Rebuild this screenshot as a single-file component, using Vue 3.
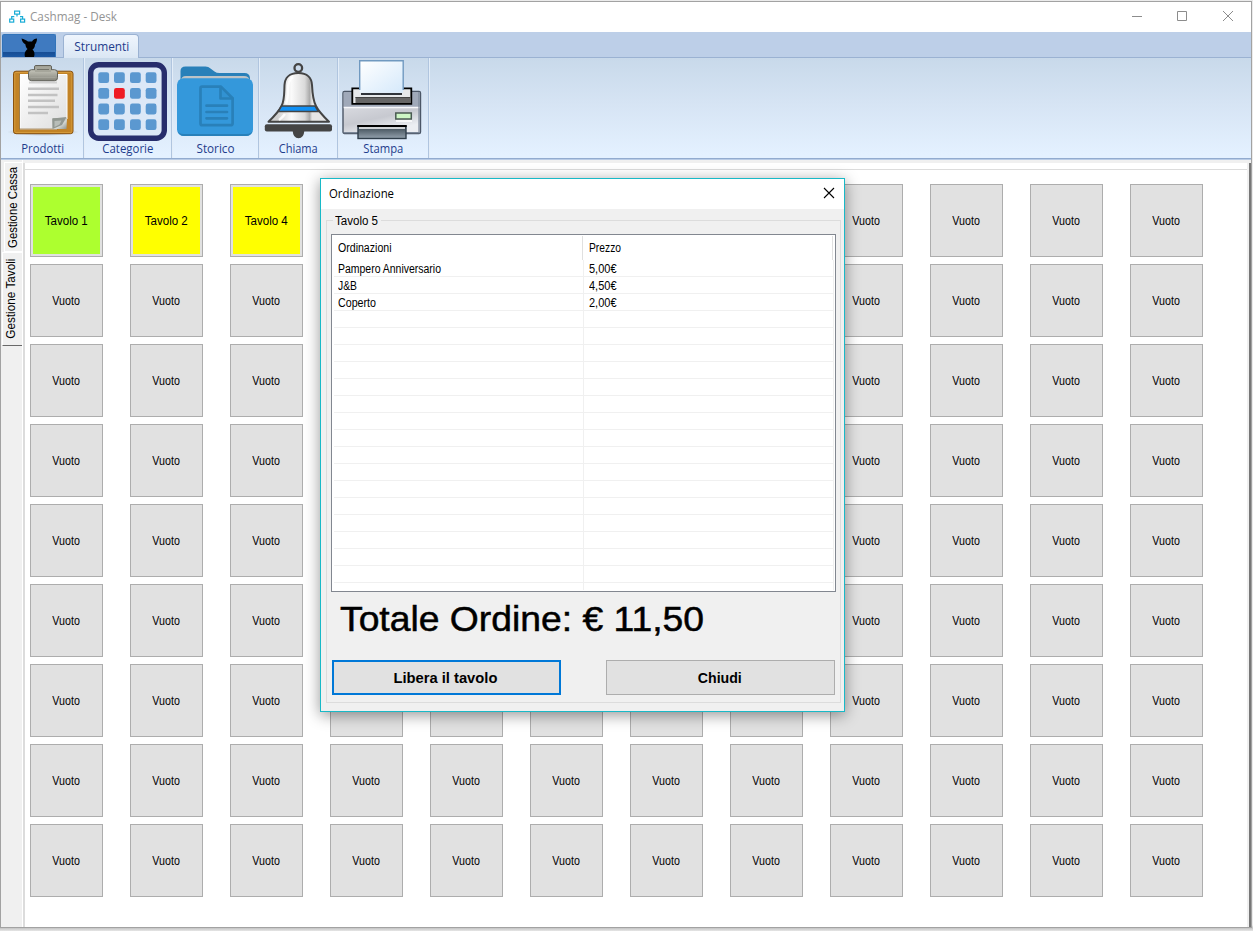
<script setup>
const rows = 9
const cols = 12
const special = { 0: ['Tavolo 1', 'green'], 1: ['Tavolo 2', 'yellow'], 2: ['Tavolo 4', 'yellow'] }
// Tables lying fully behind the dialog carry no label.
const covered = (i) => i % cols > 2 && i % cols < 8 && i < 7 * cols
const tables = Array.from({ length: rows * cols }, (_, i) => ({
  label: covered(i) ? '' : special[i]?.[0] ?? 'Vuoto',
  tone: special[i]?.[1] ?? '',
  width: special[i] ? 43 : 27.5,
}))

const orders = [
  { name: 'Pampero Anniversario', price: '5,00€', width: 103 },
  { name: 'J&B', price: '4,50€', width: 19 },
  { name: 'Coperto', price: '2,00€', width: 38 },
]
const blanks = 16
const squares = [11.3, 27, 42.6, 58.3].flatMap((y, r) =>
  [10.3, 26, 42, 57.7].map((x, c) => ({ x, y, hot: r === 1 && c === 1 })))

// Condenses or widens a label so that it takes the given length.
const vFit = {
  mounted(el, { value, modifiers }) {
    const length = modifiers.vertical ? el.offsetHeight : el.getBoundingClientRect().width
    const k = value / length
    el.style.transform = modifiers.vertical ? `rotate(180deg) scaleY(${k})` : `scaleX(${k})`
  },
}
</script>

<template>
  <div class="desktop">
    <div class="window">
      <header class="titlebar">
        <svg class="app-icon" width="17" height="14" viewBox="0 0 17 14" fill="none" stroke="#18acd6" stroke-width="1.2">
          <rect x="5.6" y="1.1" width="5" height="3" />
          <rect x="0.7" y="9.1" width="4" height="3" />
          <rect x="11.6" y="9.1" width="4" height="3" />
          <path d="M8 4v2.5M2.7 9V6.6h2.6M13.6 9V6.6H11" />
        </svg>
        <span class="app-title"><span v-fit="87" class="seg left">Cashmag - Desk</span></span>
        <svg class="controls" width="110" height="14" viewBox="0 0 110 14" fill="none" stroke="#8c8c8c">
          <path d="M0 7.5h10M45.500 2.500h9v9h-9zM91 2l10 10M101 2L91 12" />
        </svg>
      </header>

      <div class="tabstrip">
        <div class="app-button">
          <svg width="54" height="22" viewBox="0 0 54 22">
            <path d="M19.500 3.500C22 4 24 5 26 6.500h4C31 4.500 33 3.500 35 3.500C35 6.500 34 8.500 33 9.500C33 12 32 13.500 30.500 14.500C32.500 16 33 19 32 22H23C22 18 23.500 16 25.500 14C24 12.500 23.500 11 23.500 9.500C21 8 20 6 19.500 3.500Z" fill="#000" />
          </svg>
        </div>
        <div class="tab"><span v-fit="55" class="seg">Strumenti</span></div>
      </div>

      <div class="ribbon">
        <div class="tool g1">
          <svg width="80" height="80" viewBox="0 0 80 80">
            <defs>
              <linearGradient id="paper" x2="1" y2="1"><stop stop-color="#fff" /><stop offset="1" stop-color="#dedede" /></linearGradient>
              <linearGradient id="clip" x2="0" y2="1"><stop stop-color="#c6c6bb" /><stop offset="1" stop-color="#85857c" /></linearGradient>
              <linearGradient id="curl" x2="1" y2="1"><stop stop-color="#6e746e" /><stop offset=".6" stop-color="#d4d8d4" /><stop offset="1" stop-color="#8b918b" /></linearGradient>
              <radialGradient id="shade"><stop stop-color="#555" stop-opacity=".6" /><stop offset="1" stop-color="#555" stop-opacity="0" /></radialGradient>
            </defs>
            <ellipse cx="41" cy="71" rx="36" ry="4" fill="url(#shade)" />
            <rect x="11.500" y="10.200" width="59.500" height="62.500" rx="2.500" fill="#c28326" stroke="#8a5310" />
            <rect x="12.800" y="11.500" width="57" height="60" rx="1" fill="none" stroke="#d9a040" stroke-width=".8" />
            <path d="M18 13.500h47V58L55 68H18z" fill="url(#paper)" stroke="#fff" />
            <path d="M17.500 13v55h38" fill="none" stroke="#81602c" stroke-width=".7" />
            <path d="M50.500 68V57.500L65 57l-.5 11z" fill="url(#curl)" />
            <path d="M50.500 68V57.500L64.500 56L60 64z" fill="#929892" />
            <path d="M52.500 66v-6l7-.5-2 4z" fill="#b8bdb8" />
            <path d="M26 27.700h31M26 34h29.500M26 39.700h27M26 46h31M26 52h20" stroke="#c2c2c2" stroke-width="2.400" />
            <path d="M27 20.500h28v2H27z" fill="#bbb" opacity=".6" />
            <path d="M32.500 10V6q0-1.500 1.500-1.500h14q1.500 0 1.500 1.500v4" fill="#9b9b91" stroke="#62625a" />
            <rect x="26.500" y="8.700" width="29" height="11" rx="3" fill="url(#clip)" stroke="#62625a" />
            <path d="M33 5.500h16v5.500H33z" fill="#a6a69b" /><path d="M35 8.500h12" stroke="#74746b" />
            <path d="M28.500 16.500h25" stroke="#a4a49b" />
          </svg>
          <span v-fit="43" class="seg nudge">Prodotti</span>
        </div>
        <div class="tool g2">
          <svg width="79" height="80" viewBox="0 0 79 80">
            <rect x="2.700" y="3.700" width="73.600" height="73.600" rx="8" fill="#dce8f7" stroke="#272d6c" stroke-width="5.400" />
            <rect v-for="(s, i) in squares" :key="i" :x="s.x" :y="s.y" width="10.800" height="10.800" rx="2.300" :fill="s.hot ? '#ee1c25' : '#5b98d0'" />
          </svg>
          <span v-fit="51" class="seg nudge">Categorie</span>
        </div>
        <div class="tool g3">
          <svg width="80" height="80" viewBox="0 0 80 80">
            <path d="M5.500 25V10q0-4.500 5-4.500h20q3 0 5 2l4 3q2 1.500 5 1.500h25q5 0 5.500 5v8z" fill="#2980b9" />
            <path d="M6 20q0-5 5-5h58q5 0 6 5z" fill="#bdc3c7" />
            <rect x="2" y="17.300" width="76" height="57.600" rx="6.500" fill="#3498db" />
            <path d="M2.500 69q1 6 7 6h61q6 0 7.500-6-1 4-7 4H9q-6 0-6.500-4" fill="#2980b9" />
            <g fill="none" stroke="#2980b9" stroke-width="2.700" stroke-linejoin="round" stroke-linecap="round">
              <path d="M27 25.600h19l11.600 11.600v25q0 2-2 2H27q-1.500 0-1.500-2V27.500q0-1.900 1.500-1.900z" />
              <path d="M45.500 26v11.500h12M31.500 44.700h20.500M31.500 51h20.500M31.500 57.300h20.500" />
            </g>
            <path d="M45.500 26v11.500h12z" fill="#2980b9" opacity=".25" />
          </svg>
          <span v-fit="38" class="seg">Storico</span>
        </div>
        <div class="tool g4">
          <svg width="78" height="80" viewBox="0 0 78 80">
            <defs>
              <linearGradient id="bell"><stop offset=".15" stop-color="#d0d0d0" /><stop offset=".38" stop-color="#fafafa" /><stop offset=".6" stop-color="#dadada" /><stop offset=".68" stop-color="#aaa" /><stop offset=".72" stop-color="#e6e6e6" /></linearGradient>
            </defs>
            <circle cx="39.300" cy="7" r="3.800" fill="none" stroke="#444" stroke-width="2.300" />
            <path d="M33.700 70h11.600q-.5 7.300-5.800 7.300T33.700 70z" fill="#444" />
            <path d="M39.300 12c-9 0-13.500 5-13.800 12c-.4 9 .2 15-3 21c-3 6-7 10-13 15.700h60.500c-6-5.700-10-9.700-13-15.700c-3.200-6-3.600-12-4-21c-.3-7-4.700-12-13.700-12z" fill="url(#bell)" stroke="#444" stroke-width="2" stroke-linejoin="round" />
            <path d="M34 16q-5 3-5 12 0 10-2 15M26 53q-3 4-6 6" fill="none" stroke="#fff" stroke-width="2.500" opacity=".85" />
            <path d="M22.500 45h33.600l3.300 5.500H19.200z" fill="#1090f5" stroke="#444" stroke-width="1.500" />
            <rect x="5.800" y="63.200" width="67.200" height="7.200" rx="2" fill="#444" />
          </svg>
          <span v-fit="39" class="seg">Chiama</span>
        </div>
        <div class="tool g5">
          <svg width="80" height="80" viewBox="0 0 80 80">
            <defs>
              <linearGradient id="sheet" x2="1" y2="1"><stop stop-color="#fff" /><stop offset="1" stop-color="#d5e9fb" /></linearGradient>
              <linearGradient id="case" x2=".4" y2="1"><stop stop-color="#e7e8ed" /><stop offset=".7" stop-color="#c7c9d0" /><stop offset="1" stop-color="#eceef2" /></linearGradient>
              <linearGradient id="tray" x2="0" y2="1"><stop stop-color="#36434d" /><stop offset="1" stop-color="#94a2ae" /></linearGradient>
            </defs>
            <rect x="0" y="30.500" width="77.500" height="42" rx="1.500" fill="url(#case)" stroke="#4b5666" stroke-width="1.400" />
            <path d="M.7 31h76v15.500H.7z" fill="#a0a9b9" />
            <path d="M.7 46.500h76" stroke="#f7f8fb" stroke-width="1.500" />
            <path d="M76 31v41M.8 71.700H77" stroke="#7b8798" stroke-width="1.200" />
            <path d="M9.300 27.300h59v15.500h-59z" fill="#e6e8ea" stroke="#000" stroke-width="1.800" />
            <path d="M12.500 36h55v6h-55z" fill="#666" /><path d="M12.500 36.500h55" stroke="#444" />
            <rect x="16.700" y="-.2" width="43.500" height="32" fill="url(#sheet)" />
            <path d="M16.700 29V-.2h43.500V29" fill="none" stroke="#7099c0" stroke-width="1.400" />
            <path d="M18 33h41" stroke="#30343a" stroke-width="2.200" />
            <rect x="52.800" y="52" width="15.500" height="6" fill="#cdf6c5" stroke="#4a5a52" stroke-width="1.500" />
            <path d="M53 60h16" stroke="#fff" stroke-width="1.500" />
            <rect x="15" y="65" width="48" height="12.500" fill="url(#tray)" stroke="#2f3e4b" stroke-width="1.400" />
            <path d="M14.300 65h49.400" stroke="#000" stroke-width="1.800" /><path d="M16 67h46" stroke="#fff" stroke-width="1.600" />
          </svg>
          <span v-fit="40" class="seg nudge">Stampa</span>
        </div>
      </div>

      <main class="work">
        <nav class="rail">
          <div class="side first"><span v-fit.vertical="81">Gestione Cassa</span></div>
          <div class="side second"><span v-fit.vertical="80">Gestione Tavoli</span></div>
        </nav>
        <section class="page">
          <div class="grid">
            <button v-for="(t, i) in tables" :key="i" class="cell" :class="t.tone">
              <span v-if="t.label" v-fit="t.width" class="ms">{{ t.label }}</span>
            </button>
          </div>
        </section>
      </main>
    </div>

    <div class="dialog">
      <div class="dialog-title">
        <span v-fit="65" class="seg left">Ordinazione</span>
        <svg width="12" height="12" viewBox="0 0 12 12" stroke="#000" stroke-width="1.100"><path d="M1 1l10 10M11 1L1 11" /></svg>
      </div>
      <fieldset class="group">
        <legend><span v-fit="43" class="ms left">Tavolo 5</span></legend>
        <div class="list">
          <div class="head">
            <div><span v-fit="53.5" class="ms left">Ordinazioni</span></div>
            <div><span v-fit="32" class="ms left">Prezzo</span></div>
          </div>
          <div v-for="o in orders" :key="o.name" class="line">
            <div><span v-fit="o.width" class="ms left">{{ o.name }}</span></div>
            <div><span v-fit="27.5" class="ms left">{{ o.price }}</span></div>
          </div>
          <div v-for="n in blanks" :key="n" class="line"><div></div><div></div></div>
          <div class="line rest"><div></div><div></div></div>
        </div>
        <div class="total"><span v-fit="364" class="left">Totale Ordine: € 11,50</span></div>
        <div class="actions">
          <button class="btn primary"><span v-fit="104">Libera il tavolo</span></button>
          <button class="btn"><span v-fit="44">Chiudi</span></button>
        </div>
      </fieldset>
    </div>
  </div>
</template>

<style>
body { background: #ebebeb; overflow: hidden; }
</style>

<style scoped>
* { box-sizing: border-box; }
.desktop { position: relative; width: 1253px; height: 931px; padding-top: 1px; background: linear-gradient(#ebebeb 925px, #c4c4c4 928px, #e6e6e6 931px); font-family: "Liberation Sans", Arial, sans-serif; color: #000; }
.window { width: 1252px; height: 927px; border: 1px solid #a2a2a2; background: #fff; display: flex; flex-direction: column; }
span { display: inline-block; white-space: nowrap; }
.left { transform-origin: left center; }
.seg { font-family: "Open Sans", "Noto Sans", sans-serif; font-size: 12px; line-height: 16px; }
.ms { font-size: 12.5px; line-height: 15px; }
button { font-family: inherit; padding: 0; border-radius: 0; color: #000; display: flex; align-items: center; justify-content: center; }

.titlebar { height: 30px; flex: none; display: flex; align-items: center; padding: 0 9px 0 8px; }
.app-icon { flex: none; }
.app-title { flex: 1; margin-left: 4px; color: #949494; line-height: 16px; display: flex; }
.controls { margin-top: -2px; flex: none; }

.tabstrip { height: 26px; flex: none; background: #bdcfe8; border-bottom: 1px solid #9bb2d2; display: flex; padding: 2px 0 0 1px; }
.app-button { width: 54px; height: 23px; border: 1px solid #3274ba; border-bottom: 0; border-radius: 2px 2px 0 0; background: linear-gradient(#3f7ac0 17px, #174d94 17px, #1c58a3); }
.app-button svg { display: block; margin-left: -1px; }
.tab { width: 76px; height: 24px; margin-left: 7px; border: 1px solid #9bb2d2; border-bottom: 0; border-radius: 4px 4px 0 0; background: linear-gradient(#eff5fd, #dbe7f4); color: #1e3c8c; display: flex; justify-content: center; padding: 4px 0 0 1px; }

.ribbon { height: 102px; flex: none; display: flex; background: linear-gradient(#c8d9ea, #d6e4f4 45%, #e4f1ff 96%); border-bottom: 1px solid #b9cce6; box-shadow: inset 0 -1px #92abcf; }
.tool { flex: none; display: flex; flex-direction: column; align-items: center; padding-top: 3px; border-right: 1px solid #b0c5df; box-shadow: 1px 0 #e3edf8; height: 100px; color: #1e3c8c; }
.tool svg { display: block; overflow: visible; flex: none; }
.nudge { margin-left: 1px; }
.g1 { width: 83px; }
.g2 { width: 88px; }
.g3 { width: 87px; }
.g4 { width: 79px; }
.g5 { width: 91px; }

.work { flex: 1; display: flex; background: #f0f0f0; min-height: 0; }
.rail { width: 22px; padding-top: 2px; flex: none; display: flex; flex-direction: column; align-items: flex-end; border-right: 1px solid #fff; }
.side { border: 1px solid #fff; border-right: 0; background: #f0f0f0; display: flex; align-items: center; justify-content: center; }
.side span { writing-mode: vertical-rl; font-size: 12.500px; line-height: 16px; }
.first { width: 18px; height: 90px; padding-right: 2px; }
.second { width: 20px; height: 94px; border-bottom: 1px solid #696969; padding-right: 3px; }
.page { flex: 1; margin: 3px 0 0; border-left: 2px solid #dcdcdc; border-right: 2px solid #777; background: linear-gradient(90deg, #fff 1222px, #f0f0f0 1222px); padding-top: 6px; }
.grid { display: grid; grid-template-columns: repeat(12, 73px); grid-auto-rows: 73px; gap: 7px 27px; padding: 14px 0 0 5px; border-top: 1px solid #dcdcdc; margin-right: 2px; }
.cell { border: 1px solid #adadad; background: #e1e1e1; padding: 2px 1px 0 0; }
.green, .yellow { border-color: #adadad; box-shadow: inset 0 0 0 2px #e1e1e1; }
.green { background: #adff2f; }
.yellow { background: #ff0; }

.dialog { position: absolute; left: 320px; top: 178px; width: 525px; height: 534px; border: 1px solid #18b9c7; background: #f0f0f0; box-shadow: 0 3px 14px rgba(0, 0, 0, .42); }
.dialog-title { height: 30px; background: #fff; display: flex; justify-content: space-between; align-items: center; padding: 0 9px 0 8px; }
.dialog-title svg { margin-top: -2px; }
.group { width: 515px; height: 489px; margin: 5px 0 0 5px; border: 0; padding: 0 5px; position: relative; }
.group::before { content: ""; position: absolute; inset: 6px 0 0 0; border: 1px solid #dcdcdc; }
legend { position: relative; float: left; width: 48px; height: 15px; padding: 0 0 0 2px; margin: 0 0 5px 2px; background: #f0f0f0; line-height: 15px; display: flex; z-index: 1; }
.list { clear: both; position: relative; width: 505px; height: 358px; border: 1px solid #828790; background: #fff; padding: 1px; }
.head, .line { display: grid; grid-template-columns: 250px 250px; align-items: stretch; }
.head { height: 24px; align-items: center; }
.head > div { height: 24px; border-right: 1px solid #e0e0e0; padding: 5px 0 0 5px; display: flex; }
.head > div + div { padding-left: 6px; }
.line { height: 17px; margin-left: 1px; border-bottom: 1px solid #f0f0f0; }
.line > div { border-right: 1px solid #f0f0f0; padding: 2px 0 0 4px; display: flex; line-height: 15px; }
.line > div + div { padding-left: 5px; }
.rest { height: 7px; border: 0; }
.total { position: relative; font-size: 35px; line-height: 40px; height: 40px; margin: 7px 0 0 9px; -webkit-text-stroke: .5px #000; }
.actions { position: relative; display: flex; justify-content: space-between; padding: 0 1px; margin-top: 21px; }
.btn { width: 229px; height: 35px; border: 1px solid #adadad; background: #e1e1e1; font-size: 14px; font-weight: bold; padding-right: 2px; }
.primary { border: 2px solid #0078d7; }
</style>
